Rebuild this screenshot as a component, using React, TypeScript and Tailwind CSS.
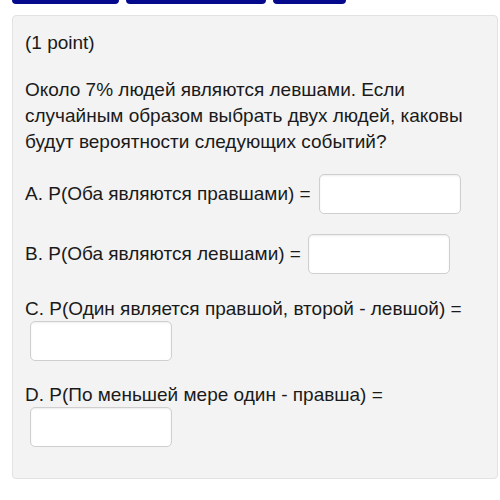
import React from 'react';

const Box: React.FC<{ className?: string }> = ({ className = '' }) => (
    <input
        type="text"
        className={`w-[142px] h-[40px] bg-white border border-[#cfcfcf] rounded-[5px] shadow-[inset_0_1px_2px_rgba(0,0,0,0.08)] outline-none ${className}`}
    />
);

export default function App() {
    return (
        <div className="w-[500px] h-[500px] bg-white text-[#1a1a1a] text-[19px] leading-[26px]" style={{ fontFamily: '"Liberation Sans", Arial, sans-serif' }}>
            {/* top nav buttons, cut off by the frame */}
            <div className="flex gap-[7px] pl-[12px] h-[4px]">
                <div className="w-[107px] h-full bg-[#050a8c] rounded-b-[4px]" />
                <div className="w-[140px] h-full bg-[#050a8c] rounded-b-[4px]" />
                <div className="w-[73px] h-full bg-[#050a8c] rounded-b-[4px]" />
            </div>

            <div className="mt-[11px] ml-[12px] w-[486px] bg-[#f3f3f3] border border-[#e2e2e2] rounded-[4px] pt-[14px] pb-[31px] pl-[12px] pr-[10px]">
                <p>(1 point)</p>

                <p className="mt-[21px]">
                    Около 7% людей являются левшами. Если случайным образом выбрать двух людей, каковы будут вероятности следующих событий?
                </p>

                <div className="mt-[19px] flex items-center gap-[8px]">
                    <span>A. P(Оба являются правшами) =</span>
                    <Box />
                </div>

                <div className="mt-[20px] flex items-center gap-[7px]">
                    <span>B. P(Оба являются левшами) =</span>
                    <Box />
                </div>

                <div className="mt-[22px]">
                    <p>C. P(Один является правшой, второй - левшой) =</p>
                    <Box className="ml-[5px] -mt-[1px] block" />
                </div>

                <div className="mt-[21px]">
                    <p>D. P(По меньшей мере один - правша) =</p>
                    <Box className="ml-[5px] -mt-[1px] block" />
                </div>
            </div>
        </div>
    );
}
